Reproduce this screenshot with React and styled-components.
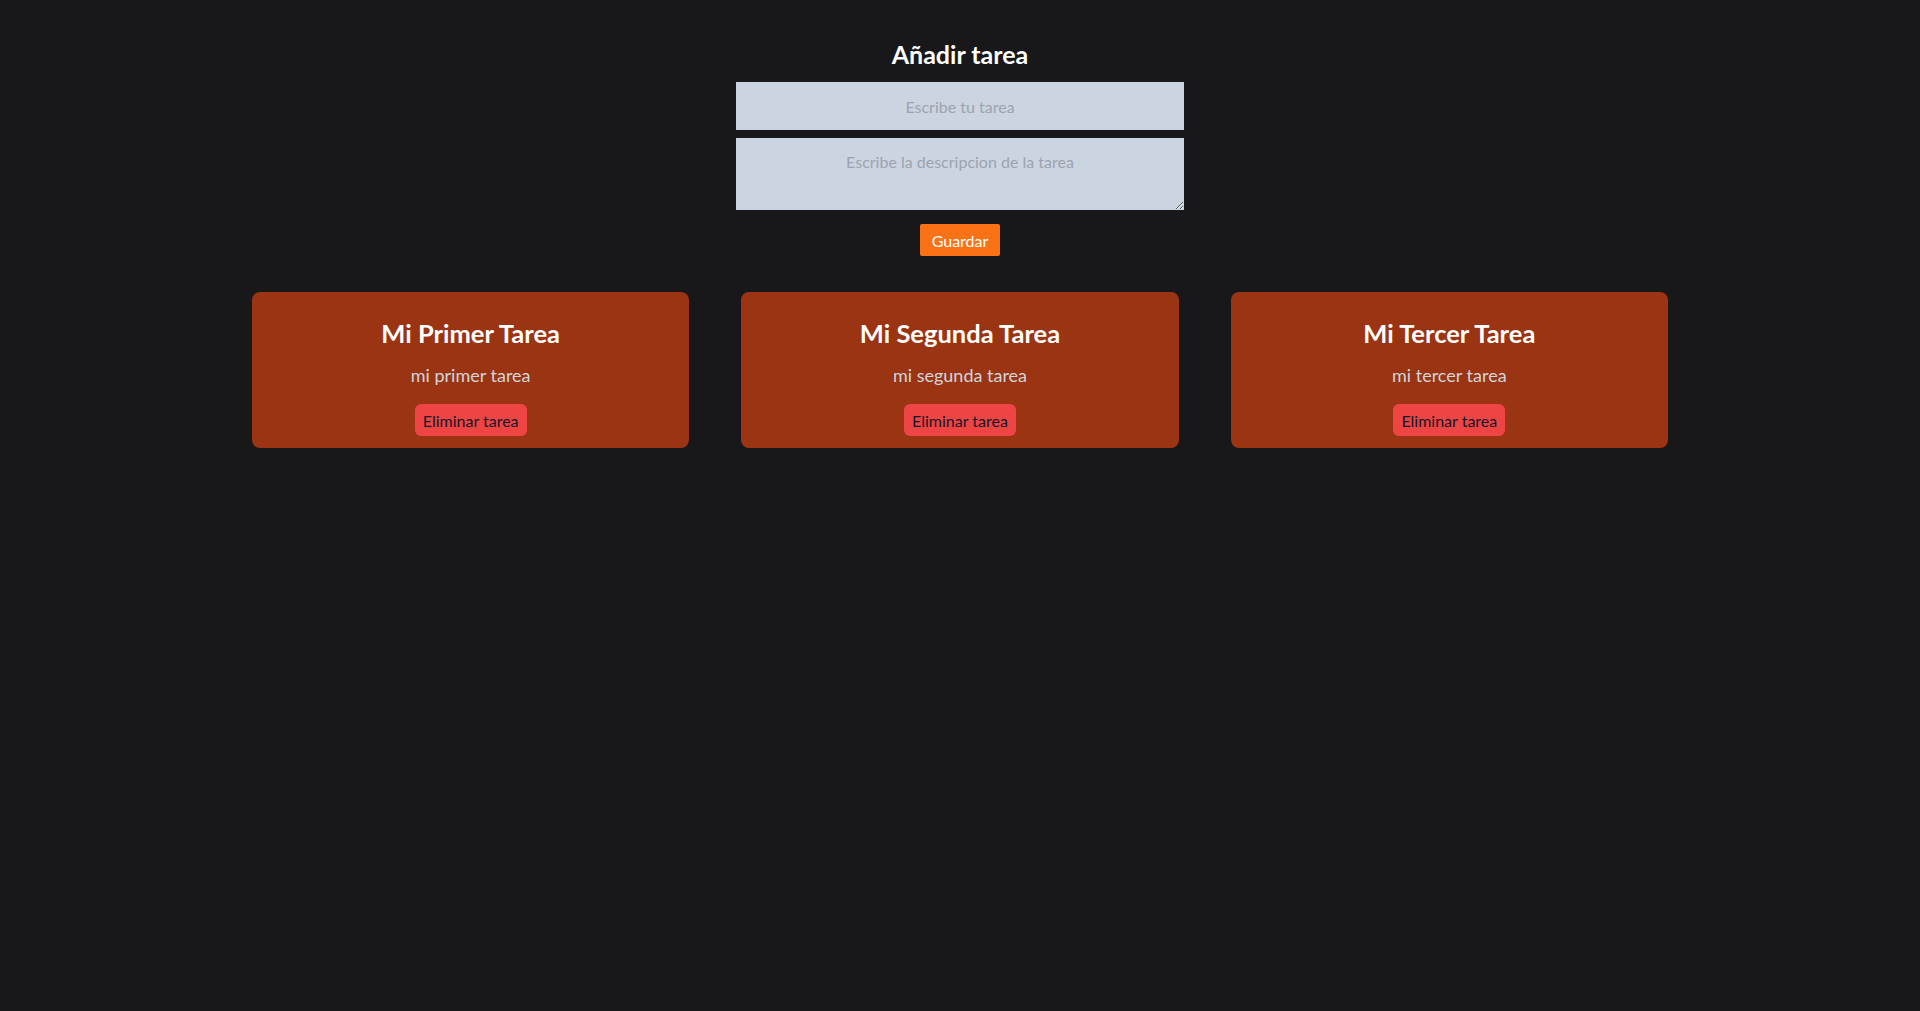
import React, { useState } from 'react';
import styled, { createGlobalStyle } from 'styled-components';

const GlobalStyle = createGlobalStyle`
  html, body {
    margin: 0;
    padding: 0;
    background-color: #18181b;
    min-height: 100%;
  }
  body {
    font-family: 'Lato', 'Open Sans', sans-serif;
    color: #ffffff;
  }
  * {
    box-sizing: border-box;
  }
`;

const Page = styled.main`
  min-height: 1011px;
  background-color: #18181b;
  padding-top: 38px;
`;

const Form = styled.form`
  width: 448px;
  margin: 0 auto;
  display: flex;
  flex-direction: column;
  align-items: center;
`;

const FormTitle = styled.h1`
  margin: 0 0 12px;
  font-size: 25px;
  line-height: 32px;
  font-weight: 700;
  color: #fff;
`;

const TextInput = styled.input`
  width: 100%;
  height: 48px;
  padding: 12px;
  border: none;
  outline: none;
  background-color: #cbd5e1;
  font-family: inherit;
  font-size: 16px;
  text-align: center;
  color: #111827;

  &::placeholder {
    color: #9ca3af;
  }
`;

const TextArea = styled.textarea`
  width: 100%;
  height: 72px;
  margin-top: 8px;
  padding: 12px;
  border: none;
  outline: none;
  background-color: #cbd5e1;
  font-family: inherit;
  font-size: 16px;
  line-height: 24px;
  text-align: center;
  color: #111827;

  &::placeholder {
    color: #9ca3af;
  }
`;

const SaveButton = styled.button`
  margin-top: 14px;
  width: 80px;
  height: 32px;
  border: none;
  border-radius: 2px;
  background-color: #f97316;
  color: #fff;
  font-family: inherit;
  font-size: 16px;
  cursor: pointer;
`;

const TaskGrid = styled.section`
  width: 1416px;
  margin: 36px auto 0;
  display: grid;
  grid-template-columns: repeat(3, 1fr);
  gap: 52px;
`;

const TaskCard = styled.article`
  height: 156px;
  padding: 25px 16px 11px;
  border-radius: 8px;
  background-color: #9a3412;
  display: flex;
  flex-direction: column;
  align-items: center;
  text-align: center;
`;

const TaskTitle = styled.h2`
  margin: 0 0 12px;
  font-size: 25.5px;
  line-height: 32px;
  font-weight: 700;
  color: #fff;
`;

const TaskDescription = styled.p`
  margin: 0 0 15px;
  font-size: 18px;
  line-height: 28px;
  color: #d1d5db;
`;

const DeleteButton = styled.button`
  height: 32px;
  padding: 0 8px;
  border: none;
  border-radius: 6px;
  background-color: #ef4444;
  color: #111827;
  font-family: inherit;
  font-size: 16px;
  font-weight: 400;
  cursor: pointer;
`;

const initialTasks = [
  { id: 1, title: 'Mi Primer Tarea', description: 'mi primer tarea' },
  { id: 2, title: 'Mi Segunda Tarea', description: 'mi segunda tarea' },
  { id: 3, title: 'Mi Tercer Tarea', description: 'mi tercer tarea' },
];

export default function App() {
  const [tasks, setTasks] = useState(initialTasks);
  const [title, setTitle] = useState('');
  const [description, setDescription] = useState('');

  const handleSubmit = (e) => {
    e.preventDefault();
    if (!title.trim()) return;
    setTasks([...tasks, { id: Date.now(), title, description }]);
    setTitle('');
    setDescription('');
  };

  return (
    <Page>
      <GlobalStyle />
      <Form onSubmit={handleSubmit}>
        <FormTitle>Añadir tarea</FormTitle>
        <TextInput
          placeholder="Escribe tu tarea"
          value={title}
          onChange={(e) => setTitle(e.target.value)}
        />
        <TextArea
          placeholder="Escribe la descripcion de la tarea"
          value={description}
          onChange={(e) => setDescription(e.target.value)}
        />
        <SaveButton type="submit">Guardar</SaveButton>
      </Form>
      <TaskGrid>
        {tasks.map((task) => (
          <TaskCard key={task.id}>
            <TaskTitle>{task.title}</TaskTitle>
            <TaskDescription>{task.description}</TaskDescription>
            <DeleteButton onClick={() => setTasks(tasks.filter((t) => t.id !== task.id))}>
              Eliminar tarea
            </DeleteButton>
          </TaskCard>
        ))}
      </TaskGrid>
    </Page>
  );
}
